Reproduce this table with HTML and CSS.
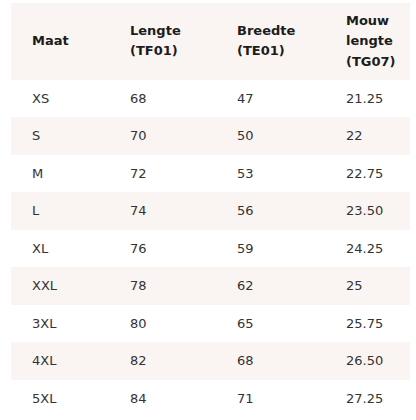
FILE: index.html
```html
<!DOCTYPE html>
<html lang="nl">
<head>
  <meta charset="UTF-8">
  <meta name="viewport" content="width=device-width, initial-scale=1">
  <title>Maattabel</title>
  <link rel="stylesheet" href="styles.css">
</head>
<body>

  <!-- Size chart -->
  <table class="size-table">
    <thead>
      <tr>
        <th class="col-size">Maat</th>
        <th class="col-len">Lengte<br>(TF01)</th>
        <th class="col-wid">Breedte<br>(TE01)</th>
        <th class="col-sleeve">Mouw<br>lengte<br>(TG07)</th>
      </tr>
    </thead>
    <tbody>
      <tr><td>XS</td><td>68</td><td>47</td><td>21.25</td></tr>
      <tr><td>S</td><td>70</td><td>50</td><td>22</td></tr>
      <tr><td>M</td><td>72</td><td>53</td><td>22.75</td></tr>
      <tr><td>L</td><td>74</td><td>56</td><td>23.50</td></tr>
      <tr><td>XL</td><td>76</td><td>59</td><td>24.25</td></tr>
      <tr><td>XXL</td><td>78</td><td>62</td><td>25</td></tr>
      <tr><td>3XL</td><td>80</td><td>65</td><td>25.75</td></tr>
      <tr><td>4XL</td><td>82</td><td>68</td><td>26.50</td></tr>
      <tr><td>5XL</td><td>84</td><td>71</td><td>27.25</td></tr>
    </tbody>
  </table>

</body>
</html>
```

FILE: styles.css
```css
/* Global */
body {
  margin: 0;
  padding: 3px 6px 0 11px;
  font-family: 'DejaVu Sans', sans-serif;
  background: #fff;
  color: #333;
}

/* Size table */
.size-table {
  width: 399px;
  border-collapse: collapse;
  table-layout: fixed;
  font-size: 13px;
}

.size-table th,
.size-table td {
  box-sizing: border-box;
  text-align: left;
  vertical-align: middle;
  padding: 8px 21px;
}

.size-table th {
  font-weight: bold;
  color: #1c1c1c;
  line-height: 20.3px;
  background: #faf5f3;
}

.size-table td {
  line-height: 21.5px;
}

.size-table tbody tr:nth-child(even) td {
  background: #faf5f3;
}

.col-size { width: 98px; }
.col-len { width: 107px; }
.col-wid { width: 109px; }
.col-sleeve { width: 85px; }
```
